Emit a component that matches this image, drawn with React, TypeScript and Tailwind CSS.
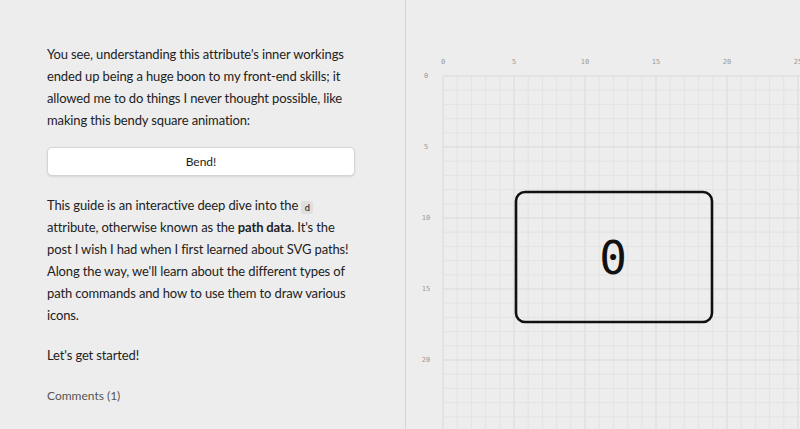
import React from "react";

const UNIT = 14.2;
const OX = 37;
const OY = 76;

const Grid: React.FC = () => {
  const cols = Array.from({ length: 26 }, (_, i) => i);
  const rows = Array.from({ length: 25 }, (_, i) => i);
  return (
    <svg width="394" height="429" viewBox="0 0 394 429" className="block">
      {cols.map((i) => (
        <line
          key={"v" + i}
          x1={OX + i * UNIT}
          x2={OX + i * UNIT}
          y1={OY}
          y2={429}
          stroke={i % 5 === 0 ? "#d9d9d9" : "#e3e3e3"}
          strokeWidth={1}
        />
      ))}
      {rows.map((i) => (
        <line
          key={"h" + i}
          x1={OX}
          x2={394}
          y1={OY + i * UNIT}
          y2={OY + i * UNIT}
          stroke={i % 5 === 0 ? "#d9d9d9" : "#e3e3e3"}
          strokeWidth={1}
        />
      ))}
      {[0, 5, 10, 15, 20, 25].map((n) => (
        <text
          key={"c" + n}
          x={OX + n * UNIT}
          y={64}
          fontSize="7"
          fill="#9a9a9a"
          textAnchor="middle"
          fontFamily="'DejaVu Sans Mono', monospace"
        >
          {n}
        </text>
      ))}
      {[0, 5, 10, 15, 20].map((n) => (
        <text
          key={"r" + n}
          x={20}
          y={OY + n * UNIT + 2}
          fontSize="7"
          fill="#9a9a9a"
          textAnchor="middle"
          fontFamily="'DejaVu Sans Mono', monospace"
        >
          {n}
        </text>
      ))}
      <rect
        x={110}
        y={192}
        width={196}
        height={130}
        rx={9}
        fill="none"
        stroke="#111"
        strokeWidth={2.6}
      />
      <text
        x={207}
        y={274}
        fontSize="46"
        fill="#111"
        textAnchor="middle"
        fontFamily="'DejaVu Sans Mono', monospace"
      >
        0
      </text>
    </svg>
  );
};

const Line: React.FC<{ children: React.ReactNode }> = ({ children }) => (
  <span className="block whitespace-nowrap">{children}</span>
);

const App: React.FC = () => {
  return (
    <div
      className="flex h-[429px] w-[800px] overflow-hidden bg-[#ededed] text-[#222]"
      style={{ fontFamily: "Lato, 'Noto Sans', sans-serif" }}
    >
      {/* Article */}
      <main className="w-[406px] shrink-0 border-r border-[#d6d6d6] pl-[47px] pt-[43px]">
        <div className="w-[312px] text-[13px] leading-[22px] tracking-[-0.01em]">
          <p>
            <Line>You see, understanding this attribute's inner workings</Line>
            <Line>ended up being a huge boon to my front-end skills; it</Line>
            <Line>allowed me to do things I never thought possible, like</Line>
            <Line>making this bendy square animation:</Line>
          </p>
          <button className="mt-[16px] h-[29px] w-[308px] rounded-[5px] border border-[#d4d4d4] bg-white text-[12px] tracking-normal text-[#222] shadow-[0_1px_2px_rgba(0,0,0,0.1)]">
            Bend!
          </button>
          <p className="mt-[18px]">
            <Line>
              This guide is an interactive deep dive into the{" "}
              <code className="inline-block h-[13px] rounded-[2px] bg-[#dfdfdf] px-[3px] align-[-1px] font-['DejaVu_Sans_Mono',monospace] text-[9.5px] leading-[13px] tracking-normal">
                d
              </code>
            </Line>
            <Line>
              attribute, otherwise known as the <strong>path data</strong>.
              It's the
            </Line>
            <Line>post I wish I had when I first learned about SVG paths!</Line>
            <Line>Along the way, we'll learn about the different types of</Line>
            <Line>path commands and how to use them to draw various</Line>
            <Line>icons.</Line>
          </p>
          <p className="mt-[18px]">Let's get started!</p>
          <p className="mt-[19px] text-[12px] tracking-normal text-[#555]">
            Comments (1)
          </p>
        </div>
      </main>

      {/* Playground */}
      <section className="flex-1">
        <Grid />
      </section>
    </div>
  );
};

export default App;
